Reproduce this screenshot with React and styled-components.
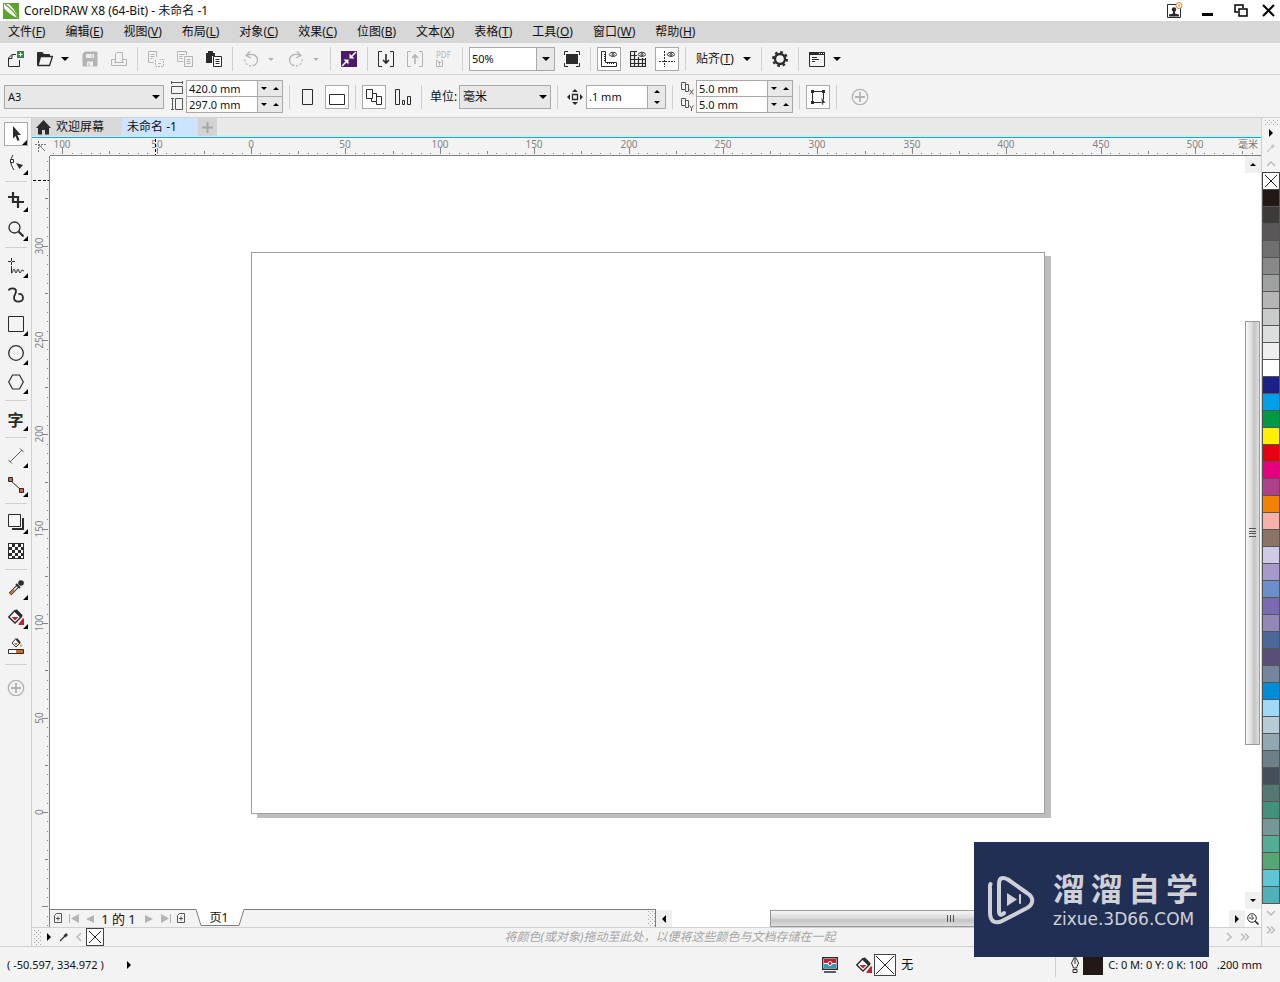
import React from "react";
import styled, { createGlobalStyle, css } from "styled-components";

const INK = "#2b2b2b";
const DIM = "#b4b4b4";
const LINE = "#a9a9a9";

const GlobalStyle = createGlobalStyle`
  * { box-sizing: border-box; }
  body {
    margin: 0;
    background: #f3f3f3;
    color: #111;
    font: 11px/16px "Noto Sans", "Noto Sans CJK SC", sans-serif;
  }
  button, input, select { font: inherit; color: inherit; margin: 0; padding: 0; }
  button { background: none; border: 0; }
  svg { display: block; flex: none; }
`;

/* ---------- shell ---------- */

const Window = styled.div`
  position: relative;
  display: flex;
  flex-direction: column;
  min-height: 100vh;
`;

const Cjk = styled.span`
  font-size: 12px;
`;

const TitleBar = styled.header`
  display: flex;
  align-items: center;
  gap: 5px;
  height: 21px;
  padding: 0 4px 0 3px;
  background: #fff;
`;

const Title = styled.h1`
  flex: 1;
  margin: 0;
  font-size: 12px;
  font-weight: 400;
`;

const WindowButtons = styled.div`
  display: flex;
  align-items: center;
  gap: 14px;
`;

const MenuBar = styled.nav`
  display: flex;
  gap: 20px;
  height: 22px;
  padding: 0 8px;
  background: #d7d7d7;
`;

const MenuItem = styled.button`
  font-size: 12px;
  line-height: 22px;
  white-space: nowrap;
`;

const Bar = styled.div`
  display: flex;
  align-items: center;
  gap: 5px;
  height: ${(p) => p.$height}px;
  padding: 1px 4px 0;
  border-bottom: 1px solid #d0d0d0;
`;

const Separator = styled.i`
  flex: none;
  ${(p) =>
    p.$flat
      ? css`width: 22px; height: 1px; margin: 1px 0;`
      : css`width: 1px; height: 24px; margin: 0 1px;`}
  background: #d0d0d0;
`;

const IconButton = styled.button`
  position: relative;
  display: flex;
  flex: none;
  align-items: center;
  justify-content: center;
  width: 24px;
  height: 24px;
  ${(p) => p.$on && css`background: #fff; border: 1px solid ${LINE};`}
  ${(p) => p.$apart && css`margin-${p.$apart}: 5px;`}
  ${(p) =>
    p.$flyout &&
    css`
      &::after {
        content: "";
        position: absolute;
        right: 0;
        bottom: 0;
        border-left: 5px solid transparent;
        border-bottom: 5px solid #000;
      }
    `}
`;

const CaretButton = styled.button`
  display: flex;
  flex: none;
  align-items: center;
  justify-content: center;
  width: 11px;
  height: 24px;
  margin: 0 3px 0 -3px;
`;

const TextButton = styled.button`
  display: flex;
  align-items: center;
  justify-content: space-between;
  width: 63px;
  height: 24px;
  padding: 0 4px;
  font-size: 12px;
  white-space: nowrap;
`;

const SelectBox = styled.div`
  position: relative;
  width: ${(p) => p.$width}px;
  height: 24px;
  select {
    width: 100%;
    height: 100%;
    padding: 0 3px;
    font-size: ${(p) => p.$size || 11}px;
    appearance: none;
    background: #e8e8e8;
    border: 1px solid ${LINE};
    border-radius: 0;
  }
  svg {
    position: absolute;
    top: 10px;
    right: 4px;
    pointer-events: none;
  }
`;

const Field = styled.div`
  display: flex;
  width: ${(p) => p.$width}px;
  height: ${(p) => p.$height}px;
  background: #fff;
  border: 1px solid ${LINE};
  ${(p) => p.$joined && css`border-top: 0;`}
  input {
    flex: 1;
    min-width: 0;
    padding: 0 2px;
    border: 0;
    outline: 0;
    background: none;
  }
`;

const Steps = styled.div`
  display: flex;
  flex-direction: ${(p) => (p.$stacked ? "column" : "row")};
  width: ${(p) => p.$width}px;
  background: #e8e8e8;
  border-left: 1px solid ${LINE};
  button {
    display: flex;
    flex: 1;
    align-items: center;
    justify-content: center;
  }
`;

const PairGroup = styled.div`
  display: flex;
  gap: 1px;
`;

const PairColumn = styled.div`
  display: flex;
  flex-direction: column;
  label {
    display: flex;
    align-items: center;
    justify-content: center;
    width: 16px;
    height: 16px;
  }
`;

const FieldLabel = styled.label`
  display: flex;
  align-items: center;
  justify-content: center;
  height: 24px;
  width: ${(p) => p.$width}px;
  margin-right: -5px;
  font-size: 12px;
  white-space: nowrap;
`;

/* ---------- workspace ---------- */

const Workspace = styled.main`
  display: flex;
  flex: 1;
`;

const Toolbox = styled.aside`
  display: flex;
  flex-direction: column;
  align-items: center;
  gap: 5px;
  width: 32px;
  padding-top: 4px;
  border-right: 1px solid #d0d0d0;
`;

const Center = styled.section`
  display: flex;
  flex: 1;
  flex-direction: column;
  min-width: 0;
`;

const Tabs = styled.div`
  display: flex;
  height: 20px;
  background: linear-gradient(#e9e9e9 0 15px, #eeebe4 15px 17px, #c8f0fb 17px);
  border-bottom: 1px solid #2b9fd0;
`;

const Tab = styled.button`
  display: flex;
  align-items: center;
  gap: 5px;
  height: 18px;
  padding: ${(p) => (p.$active ? "0 21px 0 5px" : "0 18px 0 4px")};
  background: ${(p) => (p.$active ? "#cce4ff" : "#d9d9d9")};
  font-size: 12px;
  white-space: nowrap;
`;

const NewTab = styled.button`
  display: flex;
  align-items: center;
  justify-content: center;
  width: 19px;
  height: 18px;
  background: #d3d3d3;
`;

const RulerRow = styled.div`
  display: flex;
  height: 18px;
`;

const RulerCorner = styled.div`
  display: flex;
  align-items: center;
  justify-content: center;
  width: 18px;
`;

const HorizontalRuler = styled.div`
  position: relative;
  flex: 1;
  overflow: hidden;
  border-bottom: 1px solid #7d7d7d;
`;

const RulerUnit = styled.span`
  position: absolute;
  top: 0;
  right: 3px;
  color: #777;
  font-size: 10px;
  line-height: 13px;
`;

const RulerSvg = styled.svg`
  position: absolute;
  inset: 0;
  width: 100%;
  height: 100%;
  text {
    fill: #858585;
    font-size: 10px;
    text-anchor: middle;
  }
`;

const Middle = styled.div`
  display: flex;
  flex: 1;
`;

const VerticalRuler = styled.div`
  position: relative;
  width: 18px;
  overflow: hidden;
  border-right: 1px solid #7d7d7d;
`;

const View = styled.div`
  display: flex;
  flex: 1;
  flex-direction: column;
  min-width: 0;
  background: #fff;
`;

const CanvasRow = styled.div`
  display: flex;
  flex: 1;
`;

const Canvas = styled.div`
  display: flex;
  flex: 1;
  align-items: center;
  justify-content: center;
`;

const Sheet = styled.div`
  width: 794px;
  height: 562px;
  background: #fff;
  border: 1px solid #a0a0a0;
  box-shadow: 6px 4px 0 #bdbdbd;
`;

const VerticalScroll = styled.div`
  display: flex;
  flex-direction: column;
  width: 16px;
  padding-right: 1px;
`;

const ScrollButton = styled.button`
  display: flex;
  flex: none;
  align-items: center;
  justify-content: center;
  width: 16px;
  height: 17px;
  background: ${(p) => (p.$plain ? "#fff" : "#f0f0f0")};
`;

const Track = styled.div`
  display: flex;
  flex: 1;
  flex-direction: ${(p) => (p.$vertical ? "column" : "row")};
`;

const Gap = styled.div`
  flex: ${(p) => p.$grow};
`;

const Thumb = styled.div`
  display: flex;
  flex: ${(p) => p.$grow};
  align-items: center;
  justify-content: center;
  border: 1px solid #9a9a9a;
  background: linear-gradient(${(p) => (p.$vertical ? "to right" : "to bottom")}, #f6f6f6, #dcdcde 45%, #c4c4c6 60%, #dedede);
`;

const PageRow = styled.div`
  display: flex;
  height: 18px;
`;

const PageNav = styled.div`
  display: flex;
  flex: 1;
  align-items: center;
  background: #f3f3f3;
  border-top: 1px solid #7d7d7d;
  border-right: 1px solid #7d7d7d;
`;

const NavButton = styled.button`
  display: flex;
  align-items: center;
  justify-content: center;
  width: ${(p) => p.$width || 16}px;
  height: 16px;
`;

const PageCount = styled.span`
  width: 43px;
  padding-right: 2px;
  font-size: 13px;
  text-align: center;
  white-space: nowrap;
`;

const PageTab = styled.button`
  position: relative;
  width: 48px;
  height: 18px;
  margin: -1px auto 0 7px;
  padding-right: 2px;
  font-size: 12px;
  line-height: 16px;
  svg { position: absolute; inset: 0; }
  span { position: relative; }
`;

const ScrollRow = styled.div`
  display: flex;
  flex: 1;
  padding-top: 1px;
`;

const DocPalette = styled.div`
  display: flex;
  align-items: center;
  height: 19px;
  padding: 0 8px 0 2px;
  border-top: 1px solid #d0d0d0;
`;

const Hint = styled.p`
  flex: 1;
  margin: 0;
  padding-left: 15px;
  color: #a6a6a6;
  font-size: 12px;
  font-style: italic;
  text-align: center;
`;

const Palette = styled.aside`
  display: flex;
  flex-direction: column;
  width: 19px;
  border-left: 1px solid #d0d0d0;
`;

const PaletteTool = styled.button`
  display: flex;
  align-items: center;
  justify-content: center;
  height: ${(p) => p.$height}px;
`;

const Swatch = styled.button`
  height: 17px;
  border: 1px solid #555;
  border-top: 0;
  background: ${(p) => p.$color};
`;

const NoColor = styled.button`
  display: flex;
  flex: none;
  align-items: center;
  justify-content: center;
  width: ${(p) => p.$size}px;
  height: ${(p) => p.$size}px;
  background: #fff;
  border: 1px solid #444;
`;

/* ---------- status bar ---------- */

const StatusBar = styled.footer`
  display: flex;
  align-items: center;
  height: 36px;
  padding: 0 18px 0 7px;
  border-top: 1px solid #d0d0d0;
  white-space: nowrap;
`;

const Coordinates = styled.output`
  width: 120px;
`;

const StatusFill = styled.div`
  display: flex;
  align-items: center;
  gap: 2px;
  margin-left: auto;
`;

const StatusOutline = styled.div`
  display: flex;
  align-items: center;
  height: 24px;
  margin-left: 142px;
  padding-left: 11px;
  border-left: 1px solid #d0d0d0;
`;

const OutlineColor = styled.i`
  width: 20px;
  height: 20px;
  margin-right: 5px;
  background: #231815;
`;

const OutlineWidth = styled.span`
  margin-left: 9px;
`;

/* ---------- watermark ---------- */

const Watermark = styled.div`
  position: absolute;
  right: 71px;
  bottom: 25px;
  display: flex;
  align-items: center;
  gap: 17px;
  width: 235px;
  height: 115px;
  padding: 0 11px 0 12px;
  background: #222f55;
  color: #d0d1d6;
`;

const WatermarkName = styled.strong`
  display: flex;
  justify-content: space-between;
  font: 700 32px/38px "Liberation Sans", "Noto Sans CJK SC", sans-serif;
`;

const WatermarkSite = styled.span`
  display: block;
  font: 17px/20px "DejaVu Sans", sans-serif;
`;

const WatermarkText = styled.div`
  flex: 1;
  min-width: 0;
`;

/* ---------- drawings ---------- */

const Icon = ({ size = 16, w, h, color = INK, fill = "none", sw = 1, crisp, children }) => (
  <svg
    width={w || size}
    height={h || size}
    viewBox={`0 0 ${w || size} ${h || size}`}
    fill={fill}
    stroke={color}
    strokeWidth={sw}
    shapeRendering={crisp ? "crispEdges" : undefined}
    aria-hidden="true"
  >
    {children}
  </svg>
);

const SHAPES = {
  down: [8, 4, "M0 0h8l-4 4z"],
  smallDown: [6, 3, "M0 0h6l-3 3z"],
  smallUp: [6, 3, "M0 3h6l-3-3z"],
  right: [4, 8, "M0 0l4 4-4 4z"],
  left: [4, 8, "M4 0L0 4l4 4z"],
  bigRight: [8, 8, "M0 0l8 4-8 4z"],
  bigLeft: [8, 8, "M8 0L0 4l8 4z"],
  first: [11, 9, "M0 0h1v9H0zM10 0v9L2 4.500z"],
  last: [11, 9, "M10 0h1v9h-1zM1 0v9l8-4.500z"],
};
const Arrow = ({ kind = "down", color = "#000" }) => {
  const [w, h, d] = SHAPES[kind];
  return (
    <Icon w={w} h={h} color="none" fill={color}>
      <path d={d} />
    </Icon>
  );
};

const Chevron = ({ d, w = 10, h = 10, color = "#bdbdbd" }) => (
  <Icon w={w} h={h} color={color} sw={1.6}>
    <path d={d} />
  </Icon>
);

const Cross = ({ size, color = "#222" }) => (
  <Icon size={size} color={color}>
    <path d={`M1 1L${size - 1} ${size - 1}M${size - 1} 1L1 ${size - 1}`} />
  </Icon>
);

const Dots = ({ w, h, color = "#a5a5a5" }) => {
  const dots = [];
  for (let y = 0; y < h; y += 2) for (let x = (y / 2) % 2 ? 2 : 0; x < w; x += 4) dots.push(`M${x} ${y}h1v1h-1z`);
  return (
    <Icon w={w} h={h} color="none" fill={color} crisp>
      <path d={dots.join("")} />
    </Icon>
  );
};

const PlusCircle = () => (
  <Icon size={18} color="#b3b3b3" sw={1.3}>
    <circle cx="9" cy="9" r="7.700" />
    <path d="M9 4v10M4 9h10" strokeWidth="1.800" />
  </Icon>
);

const Bucket = () => (
  <Icon>
    <path d="M7 1.500L.8 8l6.200 6L13.500 7.500z" fill="#fff" strokeWidth="1.400" />
    <path d="M7.500 1.500L13.500 7.500" strokeWidth="3.400" />
    <path d="M3.500 8h7L7 11.500z" fill="#c32032" stroke="none" />
    <path d="M10.500 15l4.500-6 1 1v6h-5.500z" fill="#c32032" stroke="none" />
  </Icon>
);

const Eyedropper = ({ size = 10, color = "#333" }) => (
  <svg width={size} height={size} viewBox="0 0 10 10" fill="none" stroke={color} aria-hidden="true">
    <path d="M1 9l5-5" strokeWidth="1.200" />
    <path d="M5.500 4.500L8 2" strokeWidth="2.600" />
    <path d="M5 3l2 2" strokeWidth="1" />
  </svg>
);

const AddPage = () => (
  <Icon w={10} h={11} color="#555">
    <path d="M3.500.5h5v9h-7v-7z" />
    <path d="M3 5.500h4M5 3.500v4" />
  </Icon>
);

const Duplicate = ({ axis }) => (
  <Icon w={14} h={14} color="#555">
    <path d="M1.500 1.500h4v7h-4zM5.500 3.500h3v7h-3v-2" />
    <path d={axis === "x" ? "M9.500 8.500l4 5M13.500 8.500l-4 5" : "M9.500 8.500l2 2.500 2-2.500M11.500 11v3"} />
  </Icon>
);

const Eye = () => (
  <>
    <path d="M8 3.500c2-3 6-3 8 0-2 2.500-6 2.500-8 0z" />
    <circle cx="12" cy="3.500" r="1" />
  </>
);

const TurnArrow = () => (
  <>
    <path d="M3.500 4.500C10 1.500 14.500 5 14.500 9a5.500 5.500 0 01-5 5.500M7 .5L3 4.500l5 2.500" />
    <path d="M8 15A6 6 0 012 8" strokeDasharray="2 2" />
  </>
);

const Glyph = styled.span`
  font: 700 16px/24px "Noto Sans CJK SC", sans-serif;
  color: ${INK};
`;

const art = {
  logo: (
    <Icon color="none">
      <path d="M0 0h16v16H0z" fill="#5ba52f" />
      <path d="M1 1h5c4 4 7 8 9 14C9 13 4 9 1 5z" fill="#fff" />
      <path d="M2 1c5 4 10 8 12.500 13.500" stroke="#5ba52f" strokeWidth="1.300" fill="none" />
    </Icon>
  ),
  newDoc: (
    <Icon>
      <path d="M8 3.500H4L.5 7v8.500h11V9M.5 7.500H4v-4" />
      <path d="M9 0h7v7H9z" fill="#2d8a49" stroke="none" />
      <path d="M12.500 1.500v4M10.500 3.500h4" stroke="#fff" />
    </Icon>
  ),
  open: (
    <Icon>
      <path d="M.5 14V1.500h5l1 2h6V6" fill={INK} />
      <path d="M1 14.500L3.500 5.500h12l-3 9z" fill="#f3f3f3" strokeWidth="1.300" />
    </Icon>
  ),
  save: (
    <Icon color={DIM}>
      <path d="M1 3l2-2h12v14H1z" fill={DIM} />
      <path d="M4 3h8v4H4zM5 10.500h6v5H5z" fill="#eee" stroke="none" />
      <path d="M10 3.500v3M7 12v3" />
    </Icon>
  ),
  print: (
    <Icon color={DIM}>
      <path d="M4.500 11.500V3L6 1.500h5.500v10M4 8.500H.5v6h15v-6H12M3 11.500h10" />
    </Icon>
  ),
  cut: (
    <Icon color={DIM}>
      <path d="M6 11.500H.5v-11h8V6M2.500 3.500h4M2.500 5.500h4M2.500 7.500h2" />
      <path d="M7.500 9v6.500h8v-7h-4" strokeDasharray="2 1" />
      <path d="M10 12.500h3" />
    </Icon>
  ),
  copy: (
    <Icon color={DIM}>
      <path d="M6 10.500H.5v-10h9V4M2.500 3.500h5M2.500 5.500h3M2.500 7.500h3" />
      <path d="M7.500 5.500h8v10h-8zM9.500 8.500h4M9.500 10.500h4M9.500 12.500h4" />
    </Icon>
  ),
  paste: (
    <Icon>
      <path d="M0 2h2V0h5v2h2v3H6v7H0z" fill={INK} stroke="none" />
      <path d="M7.500 5.500h8v10h-8zM9.500 8.500h4M9.500 10.500h4M9.500 12.500h4" fill="#fff" />
    </Icon>
  ),
  undo: (
    <Icon color={DIM} sw={1.3}>
      <TurnArrow />
    </Icon>
  ),
  redo: (
    <Icon color={DIM} sw={1.3}>
      <g transform="matrix(-1 0 0 1 16 0)">
        <TurnArrow />
      </g>
    </Icon>
  ),
  search: (
    <Icon>
      <path d="M0 0h16v16H0z" fill="#4c1a69" stroke="none" />
      <path d="M15 1l-5 5M1 15l5-5" stroke="#fff" strokeWidth="1.500" />
      <path d="M8.500 2.500v5h5zM7.500 13.500v-5h-5z" fill="#fff" stroke="none" />
    </Icon>
  ),
  importFile: (
    <Icon>
      <path d="M4 .5H.5v15H4M12 .5h3.500v15H12" />
      <path d="M8 3v9M5 9l3 3 3-3" strokeWidth="1.600" />
    </Icon>
  ),
  exportFile: (
    <Icon color={DIM}>
      <path d="M4 .5H.5v15H4M12 .5h3.500v15H12" />
      <path d="M8 13V4M5 7l3-3 3 3" strokeWidth="1.600" />
    </Icon>
  ),
  fullScreen: (
    <Icon>
      <path d="M4 .5H.5V4M12 .5h3.500V4M4 15.500H.5V12M12 15.500h3.500V12" />
      <path d="M2 3h12v10H2z" fill={INK} stroke="none" />
    </Icon>
  ),
  rulers: (
    <Icon>
      <path d="M.5.5h4v11h11v4H.5zM3 3.500h1.500M3 5.500h1.500M3 7.500h1.500M3 9.500h1.500M6.500 11.500V13M8.500 11.500V13M10.500 11.500V13M12.500 11.500V13" />
      <Eye />
    </Icon>
  ),
  grid: (
    <Icon>
      <path d="M7 .5H.5v15h15V7M0 4.500h7M0 8.500h16M0 12.500h16M4.500 0v16M8.500 6v10M12.500 7v9" strokeWidth="1.200" />
      <Eye />
    </Icon>
  ),
  guides: (
    <Icon>
      <path d="M5.500 0v16M0 10.500h16" strokeDasharray="2 1" />
      <Eye />
    </Icon>
  ),
  gear: (
    <Icon>
      <circle cx="8" cy="8" r="5" strokeWidth="2.400" />
      <circle cx="8" cy="8" r="7" strokeWidth="2" strokeDasharray="2.750 2.750" />
    </Icon>
  ),
  launcher: (
    <Icon>
      <path d="M.5 1.500h15v14H.5z" />
      <path d="M0 1h16v3H0z" fill={INK} stroke="none" />
      <path d="M10 2.500h1M12 2.500h1M14 2.500h1" stroke="#fff" />
      <path d="M3 6.500h5M3 8.500h7M3 10.500h3" />
    </Icon>
  ),
  pageWidth: (
    <Icon w={14} h={14} color="#555">
      <path d="M1 1.500h12M1.500 0v3M12.500 0v3M1.500 5.500h11v7h-11z" />
    </Icon>
  ),
  pageHeight: (
    <Icon w={14} h={14} color="#555">
      <path d="M2.500 1v12M1 1.500h3M1 12.500h3M5.500 1.500h7v11h-7z" />
    </Icon>
  ),
  portrait: (
    <Icon>
      <path d="M2.500.5h10v15h-10z" />
    </Icon>
  ),
  landscape: (
    <Icon>
      <path d="M.5 5.500h15v10H.5z" />
    </Icon>
  ),
  allPages: (
    <Icon>
      <path d="M.5.500h6v9h-6zM6.500 4.500h4v8h-5v-3M10.500 7.500h5v8h-5v-3" />
    </Icon>
  ),
  currentPage: (
    <Icon>
      <path d="M.5.5h4v15h-4zM7.500 11.500h2v4h-2zM12.500 7.500h3v8h-3z" />
    </Icon>
  ),
  nudge: (
    <Icon>
      <path d="M5.500 5.500h5v5h-5z" strokeWidth="1.300" />
      <path d="M5 3h6L8 0zM5 13h6l-3 3zM3 5v6L0 8zM13 5v6l3-3z" fill={INK} stroke="none" />
    </Icon>
  ),
  treatAsFilled: (
    <Icon>
      <path d="M2.500 2.500h11v11h-11z" />
      <path d="M1 1h3v3H1zM12 1h3v3h-3zM1 12h3v3H1z" fill={INK} stroke="none" />
      <path d="M11 8l5 6h-2.500v2h-1.500z" fill={INK} stroke="#fff" strokeWidth=".6" />
    </Icon>
  ),
  pick: (
    <Icon>
      <path d="M5 0l8 9H9.500l2 5-2 1-2-5L5 12.500z" fill={INK} stroke="none" />
    </Icon>
  ),
  shape: (
    <Icon>
      <path d="M5 0c-3 5-3 9 1 15" />
      <path d="M2.500 4.500h3v3h-3z" fill="#fff" />
      <path d="M8 8l7 2-3.500 4z" fill={INK} stroke="none" />
    </Icon>
  ),
  crop: (
    <Icon sw={2.2}>
      <path d="M5 0v10h11M0 5h10v11" />
    </Icon>
  ),
  zoom: (
    <Icon sw={1.3}>
      <circle cx="6.500" cy="6.500" r="5.500" />
      <path d="M10.500 10.500l5 5" strokeWidth="2" />
    </Icon>
  ),
  freehand: (
    <Icon>
      <path d="M3.500 0v7M0 3.500h7" strokeDasharray="3 1" />
      <path d="M3.500 8v7c1 1 1.500-4 2.500-4s1 4 2 4 1-4 2-4 1 4 2 4 1-3 2-3l2 1" />
    </Icon>
  ),
  artistic: (
    <Icon sw={1.8}>
      <path d="M.5 3.500C1.500.5 8 .5 8 4c0 3-2 4-2 6.500 0 5.500 9 5.500 9 .5 0-3-2-4.500-4.500-4" />
    </Icon>
  ),
  rectangle: (
    <Icon>
      <path d="M.5.500h15v15H.5z" />
    </Icon>
  ),
  ellipse: (
    <Icon sw={1.3}>
      <circle cx="8" cy="8" r="7.300" />
    </Icon>
  ),
  polygon: (
    <Icon sw={1.2}>
      <path d="M4.500 1h7L15.300 8l-3.800 7h-7L.7 8z" />
    </Icon>
  ),
  dimension: (
    <Icon color="#555">
      <path d="M2 14L14 2M.5 12l3.500 3.500M12 .5L15.500 4" />
    </Icon>
  ),
  connector: (
    <Icon>
      <path d="M2 3l11 10" />
      <path d="M.5.500h4v4h-4zM11.500 11.500h4v4h-4z" fill="#cf6a33" />
    </Icon>
  ),
  shadow: (
    <Icon>
      <path d="M4 15h11V4" strokeWidth="2" />
      <path d="M.5.500h12v12H.5z" fill="#f6f6f6" />
    </Icon>
  ),
  transparency: (
    <Icon color="none" fill={INK} crisp>
      <path d="M0 0h16v16H0z" />
      <path
        fill="#fff"
        d={[0, 1, 2, 3, 4]
          .flatMap((r) => [0, 1, 2, 3, 4].filter((c) => (r + c) % 2 === 0).map((c) => `M${c * 3 + 1} ${r * 3 + 1}h3v3h-3z`))
          .join("")}
      />
      <path d="M.5.5h15v15H.5z" fill="none" stroke={INK} />
    </Icon>
  ),
  eyedropper: (
    <Icon>
      <path d="M2 14l8-8" strokeWidth="3.400" />
      <path d="M3 13l7-7" stroke="#fff" strokeWidth="1.400" />
      <path d="M2 14l4-4" stroke="#cf6a33" strokeWidth="2" />
      <path d="M8 4l4 4" strokeWidth="2" />
      <circle cx="13" cy="3" r="2.800" fill={INK} stroke="none" />
    </Icon>
  ),
  fill: <Bucket />,
  smartFill: (
    <Icon>
      <path d="M8 .5L4 5l4 4 4-4z" fill="#fff" />
      <path d="M8.500 1L12 5" strokeWidth="2" />
      <path d="M6 5h4L8 7.500z" fill="#cf6a33" stroke="none" />
      <path d="M13 6v3" stroke="#cf6a33" />
      <path d="M.5 11.500h15v4H.5z" fill="#fff" />
      <path d="M8 12h7v3H8z" fill="#cf6a33" stroke="none" />
    </Icon>
  ),
  text: <Glyph>字</Glyph>,
};

/* ---------- parts ---------- */

const Tool = ({ name, label, ...rest }) => (
  <IconButton aria-label={label || name} {...rest}>
    {art[name]}
  </IconButton>
);

const Stepper = ({ id, label, value, width = 97, height = 17, stacked, joined }) => (
  <Field $width={width} $height={height} $joined={joined}>
    <input id={id} aria-label={label} defaultValue={value} />
    <Steps $stacked={stacked} $width={stacked ? 18 : 25}>
      <button aria-label={`${label} -`}>
        <Arrow kind={stacked ? "smallUp" : "smallDown"} />
      </button>
      <button aria-label={`${label} +`}>
        <Arrow kind={stacked ? "smallDown" : "smallUp"} />
      </button>
    </Steps>
  </Field>
);

const PX_PER_MM = 1.888;
const range = (from, to, step) => {
  const out = [];
  for (let v = from; v <= to; v += step) out.push(v);
  return out;
};
const tickLength = (mm) => (mm % 50 === 0 ? 6 : mm % 25 === 0 ? 3 : 1);

const RulerX = ({ origin }) => (
  <RulerSvg aria-hidden="true">
    {range(-105, 535, 5).map((mm) => {
      const x = Math.round(origin + mm * PX_PER_MM);
      const len = tickLength(mm);
      return <rect key={mm} x={x} y={16 - len} width="1" height={len} fill="#858585" />;
    })}
    {range(-100, 500, 50).map((mm) => (
      <text key={mm} x={Math.round(origin + mm * PX_PER_MM)} y="10">
        {Math.abs(mm)}
      </text>
    ))}
    <path d="M105.500 1v16" stroke="#000" strokeDasharray="3 2" />
  </RulerSvg>
);

const RulerY = ({ origin }) => (
  <RulerSvg aria-hidden="true">
    {range(-60, 345, 5).map((mm) => {
      const y = Math.round(origin - mm * PX_PER_MM);
      const len = tickLength(mm);
      return <rect key={mm} x={16 - len} y={y} width={len} height="1" fill="#858585" />;
    })}
    {range(0, 300, 50).map((mm) => {
      const y = Math.round(origin - mm * PX_PER_MM);
      return (
        <text key={mm} x="11" y={y} transform={`rotate(-90 11 ${y})`}>
          {mm}
        </text>
      );
    })}
    <path d="M1 24.500h16" stroke="#000" strokeDasharray="3 2" />
  </RulerSvg>
);

const MENUS = [
  ["文件", "F"], ["编辑", "E"], ["视图", "V"], ["布局", "L"], ["对象", "C"], ["效果", "C"],
  ["位图", "B"], ["文本", "X"], ["表格", "T"], ["工具", "O"], ["窗口", "W"], ["帮助", "H"],
];

const COLORS = [
  "#231815", "#3e3a39", "#595757", "#717071", "#898989", "#9fa0a0", "#b5b5b6", "#c9caca", "#dcdddd", "#efefef",
  "#ffffff", "#1d2088", "#00a0e9", "#009944", "#fff100", "#e60012", "#e4007f", "#ad4288", "#f08300", "#f5b1aa",
  "#8a7468", "#cfcae6", "#a59aca", "#6c8fcb", "#7a6bb0", "#9388b5", "#4a6899", "#594f74", "#76859e", "#008cd6",
  "#9fd9f6", "#b5cbd8", "#93a7b3", "#6d7f89", "#444f5a", "#547873", "#43907b", "#739897", "#56ab97", "#56a775",
  "#5fc4d3", "#4fb0b8",
];

const TOOL_GROUPS = [
  [["pick", { $on: true, $flyout: true }], ["shape", { $flyout: true }]],
  [["crop", { $flyout: true }], ["zoom", { $flyout: true }]],
  [
    ["freehand", { $flyout: true }], ["artistic", {}], ["rectangle", { $flyout: true }],
    ["ellipse", { $flyout: true }], ["polygon", { $flyout: true }],
  ],
  [["text", { $flyout: true }]],
  [["dimension", { $flyout: true }], ["connector", { $flyout: true }]],
  [["shadow", { $flyout: true }], ["transparency", {}]],
  [["eyedropper", { $flyout: true }], ["fill", { $flyout: true }], ["smartFill", {}]],
];

const Head = () => (
  <TitleBar>
    {art.logo}
    <Title>CorelDRAW X8 (64-Bit) - 未命名 -1</Title>
    <WindowButtons>
      <button aria-label="Account">
        <Icon w={18} h={18}>
          <path d="M1.500 2.500h13v13h-13z" />
          <path d="M3 14.500v-2l4-1V9h2v2.500l4 1v2z" fill={INK} stroke="none" />
          <circle cx="8" cy="7.500" r="2.200" fill={INK} stroke="none" />
          <circle cx="13" cy="3.500" r="3" fill="#fff4e8" stroke="#e08a3c" />
          <path d="M13 2v3" stroke="#e08a3c" />
        </Icon>
      </button>
      <button aria-label="Minimize">
        <Icon w={22} h={14} color="none" fill="#000">
          <path d="M4 9h11v3H4z" />
        </Icon>
      </button>
      <button aria-label="Restore">
        <Icon w={14} h={14} color="#000" sw={1.5}>
          <path d="M4 8H1V1h8v3M5 5h8v7H5z" />
        </Icon>
      </button>
      <button aria-label="Close">
        <Icon w={14} h={14} color="#000" sw={2}>
          <path d="M1 1l11 11M12 1L1 12" />
        </Icon>
      </button>
    </WindowButtons>
  </TitleBar>
);

const StandardBar = () => (
  <Bar $height={32}>
    <Tool name="newDoc" />
    <Tool name="open" />
    <CaretButton aria-label="Recent"><Arrow /></CaretButton>
    <Tool name="save" />
    <Tool name="print" />
    <Separator />
    <Tool name="cut" />
    <Tool name="copy" />
    <Tool name="paste" />
    <Separator />
    <Tool name="undo" />
    <CaretButton aria-label="Undo list"><Arrow kind="smallDown" color={DIM} /></CaretButton>
    <Tool name="redo" />
    <CaretButton aria-label="Redo list"><Arrow kind="smallDown" color={DIM} /></CaretButton>
    <Separator />
    <Tool name="search" />
    <Separator />
    <Tool name="importFile" />
    <Tool name="exportFile" />
    <IconButton aria-label="PDF">
      <svg width="18" height="18" viewBox="0 0 18 18" fill="none" stroke={DIM}>
        <text x="1" y="8" fontSize="8" fill={DIM} stroke="none">PDF</text>
        <path d="M3 10.500H1.500v6h6v-6H6M4.500 15.500v-4M3 13l1.500-1.500L6 13" />
      </svg>
    </IconButton>
    <Separator />
    <Field $width={86} $height={24}>
      <input aria-label="Zoom level" defaultValue="50%" />
      <Steps $width={18}>
        <button aria-label="Zoom levels"><Arrow /></button>
      </Steps>
    </Field>
    <Tool name="fullScreen" />
    <Separator />
    <Tool name="rulers" $on />
    <Tool name="grid" />
    <Tool name="guides" $on />
    <Separator />
    <TextButton>
      <span>贴齐(<u>T</u>)</span>
      <Arrow />
    </TextButton>
    <Separator />
    <Tool name="gear" />
    <Separator />
    <Tool name="launcher" />
    <CaretButton aria-label="Launch"><Arrow /></CaretButton>
  </Bar>
);

const PropertyBar = () => (
  <Bar $height={43}>
    <SelectBox $width={160}>
      <select aria-label="Page size" defaultValue="A3">
        <option>A3</option>
        <option>A4</option>
      </select>
      <Arrow />
    </SelectBox>
    <PairGroup>
      <PairColumn>
        <label htmlFor="page-w">{art.pageWidth}</label>
        <label htmlFor="page-h">{art.pageHeight}</label>
      </PairColumn>
      <PairColumn>
        <Stepper id="page-w" label="Width" value="420.0 mm" />
        <Stepper id="page-h" label="Height" value="297.0 mm" height={16} joined />
      </PairColumn>
    </PairGroup>
    <Separator />
    <Tool name="portrait" />
    <Tool name="landscape" $on />
    <Separator />
    <Tool name="allPages" $on />
    <Tool name="currentPage" />
    <Separator />
    <FieldLabel htmlFor="units" $width={31}>单位:</FieldLabel>
    <SelectBox $width={92} $size={12}>
      <select id="units" defaultValue="毫米">
        <option>毫米</option>
        <option>厘米</option>
      </select>
      <Arrow />
    </SelectBox>
    <Separator />
    <FieldLabel htmlFor="nudge" $width={22}>{art.nudge}</FieldLabel>
    <Stepper id="nudge" label="Nudge" value=".1 mm" width={80} height={24} stacked />
    <Separator />
    <PairGroup>
      <PairColumn>
        <label htmlFor="dup-x"><Duplicate axis="x" /></label>
        <label htmlFor="dup-y"><Duplicate axis="y" /></label>
      </PairColumn>
      <PairColumn>
        <Stepper id="dup-x" label="Offset X" value="5.0 mm" />
        <Stepper id="dup-y" label="Offset Y" value="5.0 mm" height={16} joined />
      </PairColumn>
    </PairGroup>
    <Separator />
    <Tool name="treatAsFilled" $on />
    <Separator />
    <IconButton aria-label="Customize" $apart="left"><PlusCircle /></IconButton>
  </Bar>
);

const PageNavigator = () => (
  <PageNav>
    <NavButton aria-label="Add page before"><AddPage /></NavButton>
    <NavButton aria-label="First page"><Arrow kind="first" color={DIM} /></NavButton>
    <NavButton aria-label="Previous page"><Arrow kind="bigLeft" color={DIM} /></NavButton>
    <PageCount>1 的 1</PageCount>
    <NavButton aria-label="Next page"><Arrow kind="bigRight" color={DIM} /></NavButton>
    <NavButton aria-label="Last page"><Arrow kind="last" color={DIM} /></NavButton>
    <NavButton aria-label="Add page after"><AddPage /></NavButton>
    <PageTab>
      <Icon w={48} h={18} color="none" fill="#fff">
        <path d="M0 0l5 16.500h38L48 0z" />
        <path d="M0 .5l5 16h38l5-16" fill="none" stroke="#7d7d7d" />
      </Icon>
      <span>页1</span>
    </PageTab>
    <Dots w={7} h={15} />
  </PageNav>
);

export default function App() {
  return (
    <Window>
      <GlobalStyle />
      <Head />
      <MenuBar>
        {MENUS.map(([name, key]) => (
          <MenuItem key={name}>
            {name}(<u>{key}</u>)
          </MenuItem>
        ))}
      </MenuBar>
      <StandardBar />
      <PropertyBar />

      <Workspace>
        <Toolbox>
          {TOOL_GROUPS.map((group, i) => (
            <React.Fragment key={i}>
              {group.map(([name, props]) => (
                <Tool key={name} name={name} {...props} />
              ))}
              <Separator $flat />
            </React.Fragment>
          ))}
          <IconButton aria-label="Customize tools" $apart="top"><PlusCircle /></IconButton>
        </Toolbox>

        <Center>
          <Tabs>
            <Tab>
              <Icon w={15} h={15} color="none" fill={INK}>
                <path d="M7.500 0L0 8h2v6.500h4V10h3v4.500h4V8h2z" />
              </Icon>
              欢迎屏幕
            </Tab>
            <Tab $active>未命名 -1</Tab>
            <NewTab aria-label="New document">
              <Icon w={11} h={11} color="#a5a5a5" sw={2}>
                <path d="M5.500 0v11M0 5.500h11" />
              </Icon>
            </NewTab>
          </Tabs>

          <RulerRow>
            <RulerCorner>
              <Icon w={12} h={14} color="#777">
                <path d="M3.500 1v12M0 4.500h12" strokeDasharray="2 1" />
                <path d="M4 5l6 6M7 5.500l-3 2" />
              </Icon>
            </RulerCorner>
            <HorizontalRuler>
              <RulerX origin={201} />
              <RulerUnit>毫米</RulerUnit>
            </HorizontalRuler>
          </RulerRow>

          <Middle>
            <VerticalRuler>
              <RulerY origin={656} />
            </VerticalRuler>
            <View>
              <CanvasRow>
                <Canvas>
                  <Sheet />
                </Canvas>
                <VerticalScroll>
                  <ScrollButton aria-label="Scroll up"><Arrow kind="smallUp" /></ScrollButton>
                  <Track $vertical>
                    <Gap $grow={149} />
                    <Thumb $vertical $grow={423}>
                      <Icon w={7} h={9} color="#555" crisp>
                        <path d="M0 .5h7M0 3.500h7M0 5.500h7M0 8.500h7" />
                      </Icon>
                    </Thumb>
                    <Gap $grow={148} />
                  </Track>
                  <ScrollButton aria-label="Scroll down"><Arrow kind="smallDown" /></ScrollButton>
                </VerticalScroll>
              </CanvasRow>
              <PageRow>
                <PageNavigator />
                <ScrollRow>
                  <ScrollButton aria-label="Scroll left"><Arrow kind="left" /></ScrollButton>
                  <Track>
                    <Gap $grow={98} />
                    <Thumb $grow={358}>
                      <Icon w={9} h={7} color="#555" crisp>
                        <path d="M1.500 0v7M4.500 0v7M7.500 0v7" />
                      </Icon>
                    </Thumb>
                    <Gap $grow={98} />
                  </Track>
                  <ScrollButton aria-label="Scroll right"><Arrow kind="right" /></ScrollButton>
                  <ScrollButton aria-label="Navigator" $plain>
                    <Icon w={12} h={12}>
                      <circle cx="5" cy="5" r="4.300" />
                      <path d="M8 8l3.500 3.500" strokeWidth="1.600" />
                      <path d="M5 2v6M2 5h6" strokeDasharray="2 1" />
                    </Icon>
                  </ScrollButton>
                </ScrollRow>
              </PageRow>
            </View>
          </Middle>

          <DocPalette>
            <Dots w={7} h={15} />
            <NavButton $width={15} aria-label="Palette menu"><Arrow kind="right" /></NavButton>
            <NavButton $width={15} aria-label="Pick colour"><Eyedropper /></NavButton>
            <NavButton $width={15} aria-label="Back"><Chevron w={8} h={10} d="M6 1L2 5l4 4" /></NavButton>
            <NoColor $size={18} aria-label="No colour"><Cross size={14} /></NoColor>
            <Hint>将颜色(或对象)拖动至此处，以便将这些颜色与文档存储在一起</Hint>
            <NavButton aria-label="Forward"><Chevron w={8} h={10} d="M2 1l4 4-4 4" /></NavButton>
            <NavButton aria-label="More"><Chevron d="M1 1.500L4.500 5 1 8.500M5 1.500L8.500 5 5 8.500" /></NavButton>
          </DocPalette>
        </Center>

        <Palette>
          <PaletteTool $height={9} aria-label="Move palette"><Dots w={13} h={5} /></PaletteTool>
          <PaletteTool $height={12} aria-label="Palette menu"><Arrow kind="right" /></PaletteTool>
          <PaletteTool $height={17} aria-label="Pick colour"><Eyedropper color="#c8c8c8" /></PaletteTool>
          <PaletteTool $height={16} aria-label="Up"><Chevron w={10} h={6} d="M1 5l4-4 4 4" /></PaletteTool>
          <NoColor $size={18} aria-label="No colour"><Cross size={14} /></NoColor>
          {COLORS.map((color) => (
            <Swatch key={color} $color={color} aria-label={color} />
          ))}
          <PaletteTool $height={17} aria-label="Down"><Chevron w={10} h={6} d="M1 1l4 4 4-4" /></PaletteTool>
          <PaletteTool $height={17} aria-label="More colours">
            <Chevron d="M1 1.500L4.500 5 1 8.500M5 1.500L8.500 5 5 8.500" />
          </PaletteTool>
        </Palette>
      </Workspace>

      <StatusBar>
        <Coordinates>( -50.597, 334.972 )</Coordinates>
        <button aria-label="Status options"><Arrow kind="right" /></button>
        <StatusFill>
          <Icon w={16} h={16}>
            <path d="M.7.700h14.600v11.600H.7z" fill="#fff" strokeWidth="1.400" />
            <path d="M2 2h12v4H2z" fill="#c32032" stroke="none" />
            <path d="M2 7h12v4H2z" fill="#2a9ac6" stroke="none" />
            <circle cx="8" cy="6.500" r="2" fill="#c32032" stroke="#fff" />
            <path d="M2 15h12" strokeWidth="1.500" />
          </Icon>
          <Gap $grow="0 0 14px" />
          <Bucket />
          <NoColor $size={22} aria-label="No fill"><Cross size={20} /></NoColor>
          <Gap $grow="0 0 1px" />
          <Cjk>无</Cjk>
        </StatusFill>
        <StatusOutline>
          <Icon w={16} h={18}>
            <path d="M8 0L4.500 7l2 5h3l2-5zM8 2v6M6 13.500h4v3H6z" />
          </Icon>
          <OutlineColor />
          C: 0 M: 0 Y: 0 K: 100
          <OutlineWidth>.200 mm</OutlineWidth>
        </StatusOutline>
      </StatusBar>

      <Watermark>
        <svg width="50" height="50" viewBox="0 0 50 50" fill="none" stroke="#d0d1d6" strokeWidth="4" strokeLinecap="round">
          <path
            d="M4.500 9C3.500 11 4 12 4 14v24c0 9 6 11 12 8l25-13c7-4 7-11 0-15L22 4.500C16 1.500 13 3 13 9v27c0 4 2 5 5 2"
            strokeLinejoin="round"
          />
          <path d="M21 18l10 6.500L21 31z" fill="#d0d1d6" stroke="none" />
          <path d="M34 20v8" strokeWidth="2" />
        </svg>
        <WatermarkText>
          <WatermarkName>
            <span>溜</span>
            <span>溜</span>
            <span>自</span>
            <span>学</span>
          </WatermarkName>
          <WatermarkSite>zixue.3D66.COM</WatermarkSite>
        </WatermarkText>
      </Watermark>
    </Window>
  );
}
